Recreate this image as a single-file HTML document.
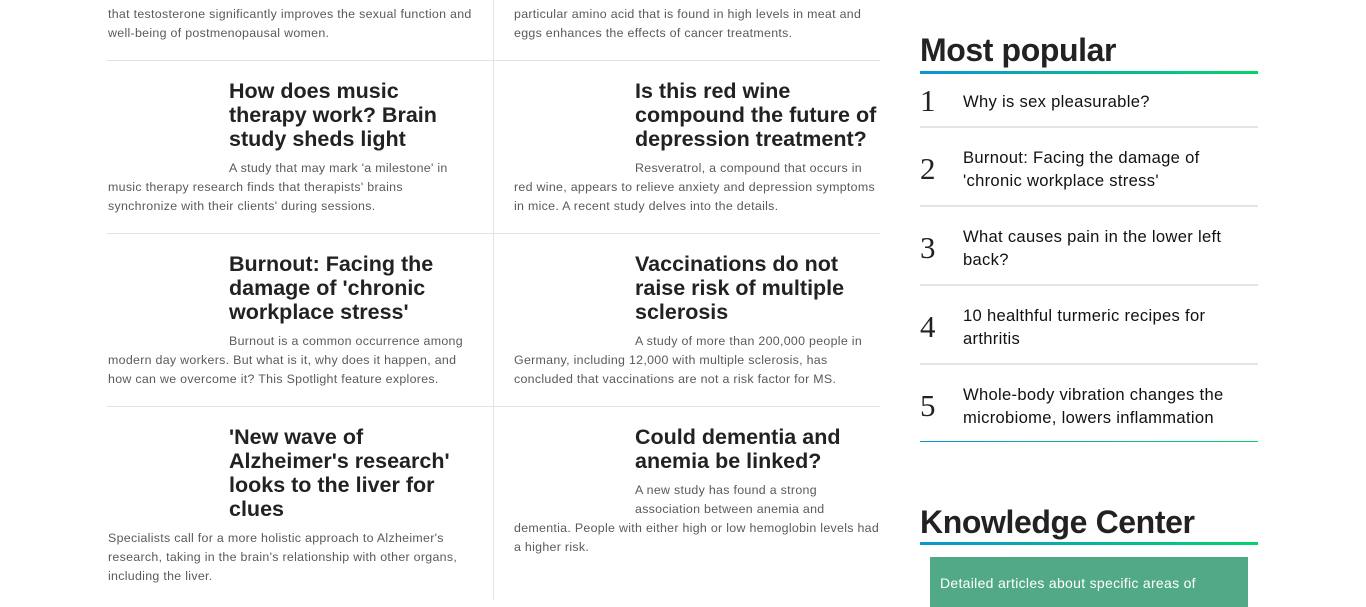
<!DOCTYPE html>
<html><head><meta charset="utf-8"><style>
*{margin:0;padding:0;box-sizing:border-box}
body{width:1366px;height:600px;overflow:hidden;background:#fff;font-family:"Liberation Sans",Arial,sans-serif;position:relative}
.a{position:absolute}
.h{font-size:21.5px;font-weight:bold;line-height:24px;color:#222;width:232px}
.d{font-size:12.4px;line-height:19px;color:#5a5a5a;width:366px;letter-spacing:0.3px}
.hl{position:absolute;height:1px;background:#e3e3e3}
.vl{position:absolute;width:1px;background:#e3e3e3;left:493px;top:0;height:600px}
.n{position:absolute;left:920px;font-family:"Liberation Serif",serif;font-size:31px;color:#222}
.t{position:absolute;left:963px;font-size:16.6px;line-height:23px;color:#111;width:290px;letter-spacing:0.3px}
.s{position:absolute;left:920px;width:338px;height:2px;background:#e4e4e4}
.g{background:linear-gradient(90deg,#0a96d2,#03d36a)}
.tt{position:absolute;left:920px;font-size:32px;font-weight:bold;color:#222;letter-spacing:-0.4px}
</style></head><body>
<div class="vl"></div>
<div class="hl" style="left:107px;width:773px;top:60px"></div>
<div class="hl" style="left:107px;width:773px;top:233px"></div>
<div class="hl" style="left:107px;width:773px;top:406px"></div>

<div class="a d" style="left:108px;top:5px">that testosterone significantly improves the sexual function and well-being of postmenopausal women.</div>
<div class="a d" style="left:514px;top:5px;width:360px">particular amino acid that is found in high levels in meat and eggs enhances the effects of cancer treatments.</div>

<div class="a h" style="left:229px;top:79px">How does music therapy work? Brain study sheds light</div>
<div class="a d" style="left:108px;top:159px;text-indent:121px;width:360px">A study that may mark 'a milestone' in music therapy research finds that therapists' brains synchronize with their clients' during sessions.</div>
<div class="a h" style="left:635px;top:79px;width:250px">Is this red wine compound the future of depression treatment?</div>
<div class="a d" style="left:514px;top:159px;text-indent:121px;width:364px">Resveratrol, a compound that occurs in red wine, appears to relieve anxiety and depression symptoms in mice. A recent study delves into the details.</div>

<div class="a h" style="left:229px;top:252px">Burnout: Facing the damage of 'chronic workplace stress'</div>
<div class="a d" style="left:108px;top:332px;text-indent:121px">Burnout is a common occurrence among modern day workers. But what is it, why does it happen, and how can we overcome it? This Spotlight feature explores.</div>
<div class="a h" style="left:635px;top:252px;width:240px">Vaccinations do not raise risk of multiple sclerosis</div>
<div class="a d" style="left:514px;top:332px;text-indent:121px;width:362px">A study of more than 200,000 people in Germany, including 12,000 with multiple sclerosis, has concluded that vaccinations are not a risk factor for MS.</div>

<div class="a h" style="left:229px;top:425px;width:232px">'New wave of Alzheimer's research' looks to the liver for clues</div>
<div class="a d" style="left:108px;top:529px;width:360px">Specialists call for a more holistic approach to Alzheimer's research, taking in the brain's relationship with other organs, including the liver.</div>
<div class="a h" style="left:635px;top:425px;width:240px">Could dementia and anemia be linked?</div>
<div class="a d" style="left:635px;top:481px;width:240px">A new study has found a strong<br>association between anemia and</div>
<div class="a d" style="left:514px;top:519px;width:374px">dementia. People with either high or low hemoglobin levels had a higher risk.</div>

<div class="tt" style="top:32px">Most popular</div>
<div class="a g" style="left:920px;top:71px;width:338px;height:3px"></div>
<div class="n" style="top:83px">1</div><div class="t" style="top:90px">Why is sex pleasurable?</div>
<div class="s" style="top:126px"></div>
<div class="n" style="top:151px">2</div><div class="t" style="top:146px;width:270px">Burnout: Facing the damage of 'chronic workplace stress'</div>
<div class="s" style="top:205px"></div>
<div class="n" style="top:230px">3</div><div class="t" style="top:225px">What causes pain in the lower left back?</div>
<div class="s" style="top:284px"></div>
<div class="n" style="top:309px">4</div><div class="t" style="top:304px;width:265px">10 healthful turmeric recipes for arthritis</div>
<div class="s" style="top:363px"></div>
<div class="n" style="top:388px">5</div><div class="t" style="top:383px">Whole-body vibration changes the microbiome, lowers inflammation</div>
<div class="a g" style="left:920px;top:441px;width:338px;height:1px"></div>

<div class="tt" style="top:504px">Knowledge Center</div>
<div class="a g" style="left:920px;top:542px;width:338px;height:3px"></div>
<div class="a" style="left:930px;top:557px;width:318px;height:50px;background:#51a985;color:#fff;font-size:14px;letter-spacing:0.3px;padding:18px 0 0 10px">Detailed articles about specific areas of</div>
</body></html>
